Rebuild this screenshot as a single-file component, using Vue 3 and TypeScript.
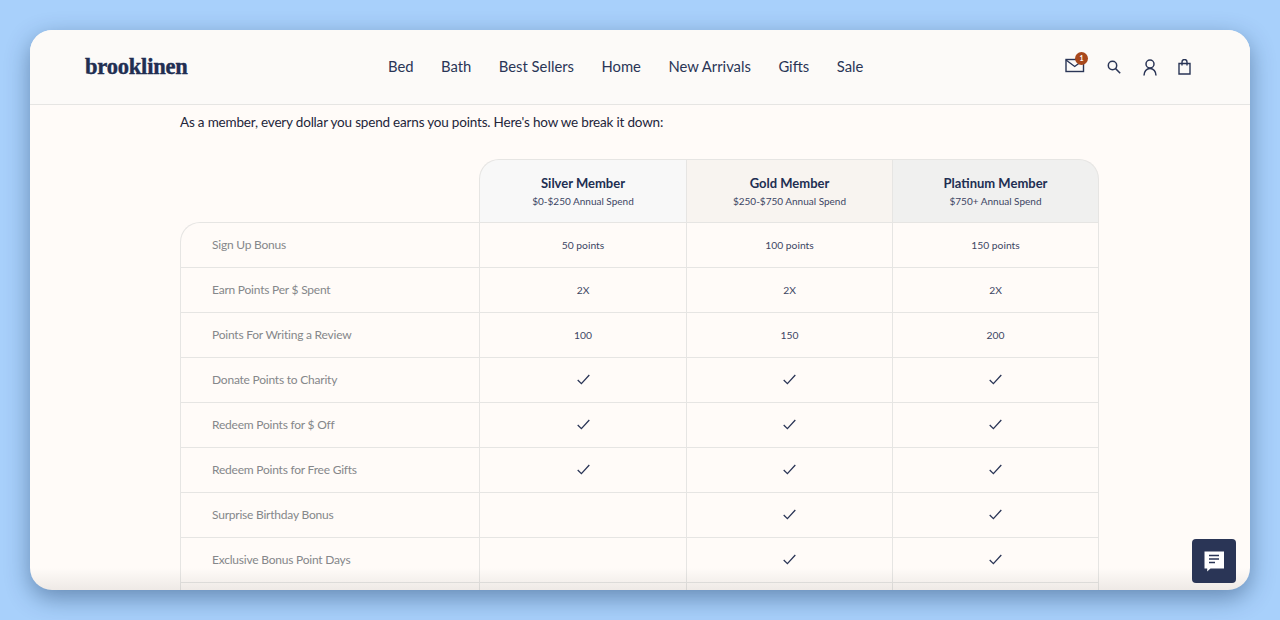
<script setup lang="ts">
type Row = { label: string; values: string[] }

const navItems = ['Bed', 'Bath', 'Best Sellers', 'Home', 'New Arrivals', 'Gifts', 'Sale']

const tiers = [
  { name: 'Silver Member', spend: '$0-$250 Annual Spend', cls: 'silver' },
  { name: 'Gold Member', spend: '$250-$750 Annual Spend', cls: 'gold' },
  { name: 'Platinum Member', spend: '$750+ Annual Spend', cls: 'platinum' },
]

// "check" draws the tick, an empty string leaves the cell blank
const rows: Row[] = [
  { label: 'Sign Up Bonus', values: ['50 points', '100 points', '150 points'] },
  { label: 'Earn Points Per $ Spent', values: ['2X', '2X', '2X'] },
  { label: 'Points For Writing a Review', values: ['100', '150', '200'] },
  { label: 'Donate Points to Charity', values: ['check', 'check', 'check'] },
  { label: 'Redeem Points for $ Off', values: ['check', 'check', 'check'] },
  { label: 'Redeem Points for Free Gifts', values: ['check', 'check', 'check'] },
  { label: 'Surprise Birthday Bonus', values: ['', 'check', 'check'] },
  { label: 'Exclusive Bonus Point Days', values: ['', 'check', 'check'] },
  { label: '', values: ['', '', ''] },
]
</script>

<template>
  <div class="page">
    <div class="window">
      <header class="topbar">
        <div class="logo">brooklinen</div>
        <nav class="nav">
          <a v-for="item in navItems" :key="item">{{ item }}</a>
        </nav>
        <div class="icons">
          <span class="mail">
            <svg width="20" height="15" viewBox="0 0 20 15" fill="none" stroke="#2a3556" stroke-width="1.4">
              <rect x="1" y="1.5" width="17.5" height="12" />
              <path d="M1 2l8.7 6.5L18.500 2" />
            </svg>
            <span class="badge">1</span>
          </span>
          <svg class="search" width="14" height="14" viewBox="0 0 14 14" fill="none" stroke="#2a3556" stroke-width="1.500">
            <circle cx="5.500" cy="5.500" r="4.200" />
            <path d="M8.600 8.600L13.200 13.200" />
          </svg>
          <svg class="user" width="14" height="17" viewBox="0 0 14 17" fill="none" stroke="#2a3556" stroke-width="1.500">
            <circle cx="7" cy="5" r="4" />
            <path d="M1 16.500c0-4 2.500-7 6-7s6 3 6 7" />
          </svg>
          <svg class="bag" width="13" height="16" viewBox="0 0 13 16" fill="none" stroke="#2a3556" stroke-width="1.400">
            <path d="M1 4.500h11v10.500H1z" />
            <path d="M4 6.500V3a2.500 2.500 0 0 1 5 0v3.500" />
          </svg>
        </div>
      </header>

      <main class="content">
        <p class="intro">As a member, every dollar you spend earns you points. Here's how we break it down:</p>

        <div class="table">
          <div class="head-row">
            <div class="head-spacer"></div>
            <div v-for="tier in tiers" :key="tier.name" class="head-cell" :class="tier.cls">
              <strong>{{ tier.name }}</strong>
              <span>{{ tier.spend }}</span>
            </div>
          </div>
          <div class="body">
            <div v-for="(row, i) in rows" :key="i" class="row">
              <div class="label">{{ row.label }}</div>
              <div v-for="(val, j) in row.values" :key="j" class="cell">
                <svg v-if="val === 'check'" class="tick" width="13" height="11" viewBox="0 0 13 11" fill="none" stroke="#2a3556" stroke-width="1.300">
                  <path d="M.7 6l3.700 3.600L12.300 1" />
                </svg>
                <template v-else>{{ val }}</template>
              </div>
            </div>
          </div>
        </div>
      </main>

      <div class="fade"></div>

      <button class="chat" type="button">
        <svg width="22" height="22" viewBox="0 0 22 22">
          <path d="M1.500 1.500h19.500v17H7.500L4.200 21.500v-3H1.500z" fill="#fff" />
          <path d="M6 5.500h10M6 9h10M6 12.500h6" stroke="#2a3556" stroke-width="1.500" />
        </svg>
      </button>
    </div>
  </div>
</template>

<style>
html,
body {
  margin: 0;
  overflow: hidden;
}
</style>

<style scoped>
.page {
  width: 1280px;
  height: 620px;
  box-sizing: border-box;
  padding: 30px;
  background: #a8d0fb;
  font-family: Lato, 'Liberation Sans', sans-serif;
}

.window {
  position: relative;
  height: 560px;
  overflow: hidden;
  border-radius: 22px;
  background: #fffbf8;
  box-shadow: 0 8px 24px rgba(20, 50, 90, 0.45);
}

.topbar {
  display: flex;
  align-items: center;
  height: 74px;
  padding: 0 59px 0 55px;
  background: #fcfaf8;
  border-bottom: 1px solid #e6e5e3;
  position: relative;
}

.logo {
  font-family: 'Liberation Serif', serif;
  font-weight: 700;
  font-size: 22.500px;
  letter-spacing: -0.2px;
  color: #212e52;
  -webkit-text-stroke: 0.4px #212e52;
}

.nav {
  position: absolute;
  left: 358px;
  top: 26px;
  display: flex;
  gap: 27.500px;
  font-size: 14.800px;
  line-height: 20px;
  color: #2a3556;
}

.icons {
  margin-left: auto;
  display: flex;
  align-items: center;
  gap: 0;
}

.mail {
  position: relative;
  display: flex;
  margin-right: 22px;
  top: -2px;
}

.badge {
  position: absolute;
  left: 10px;
  top: -6px;
  width: 13px;
  height: 13px;
  border-radius: 50%;
  background: #a8481c;
  color: #fff;
  font-size: 7px;
  font-weight: 700;
  line-height: 13px;
  text-align: center;
}

.search {
  margin-right: 22px;
}

.user {
  margin-right: 21px;
}

.content {
  padding: 0 150px;
}

.intro {
  margin: 7px 0 27px;
  font-size: 13.500px;
  letter-spacing: -0.19px;
  line-height: 20px;
  color: #23253a;
}

.table {
  width: 919px;
  font-size: 10.300px;
  color: #3c4563;
}

.head-row,
.row {
  display: grid;
}

.head-row {
  grid-template-columns: 299px 207px 206px 207px;
}

.row {
  grid-template-columns: 298px 207px 206px 207px;
}

.head-cell {
  height: 63px;
  display: flex;
  flex-direction: column;
  align-items: center;
  justify-content: center;
  gap: 4px;
  box-sizing: border-box;
  border-top: 1px solid #e6e5e3;
  border-left: 1px solid #e6e5e3;
}

.head-cell strong {
  font-size: 13px;
  color: #212e52;
}

.head-cell span {
  font-size: 10px;
}

.silver {
  background: #f8f8f8;
  border-top-left-radius: 20px;
}

.gold {
  background: #f8f4f0;
}

.platinum {
  background: #f0f0ef;
  border-right: 1px solid #e6e5e3;
  border-top-right-radius: 20px;
}

.body {
  border-top: 1px solid #e6e5e3;
  border-left: 1px solid #e6e5e3;
  border-top-left-radius: 20px;
}

.row {
  height: 45px;
  box-sizing: border-box;
  border-bottom: 1px solid #e6e5e3;
}

.label {
  display: flex;
  align-items: center;
  padding-left: 31px;
  padding-bottom: 2px;
  font-size: 12px;
  letter-spacing: -0.22px;
  color: #85878a;
}

.cell {
  display: flex;
  align-items: center;
  justify-content: center;
  border-left: 1px solid #e6e5e3;
}

.cell:last-child {
  border-right: 1px solid #e6e5e3;
}

.tick {
  margin-bottom: 2px;
}

.fade {
  position: absolute;
  left: 0;
  right: 0;
  bottom: 0;
  height: 22px;
  background: linear-gradient(rgba(90, 80, 70, 0), rgba(90, 80, 70, 0.1));
  pointer-events: none;
}

.chat {
  position: absolute;
  right: 14px;
  bottom: 7px;
  width: 44px;
  height: 44px;
  padding: 0;
  border: 0;
  border-radius: 4px;
  background: #2a3556;
  display: flex;
  align-items: center;
  justify-content: center;
}
</style>
